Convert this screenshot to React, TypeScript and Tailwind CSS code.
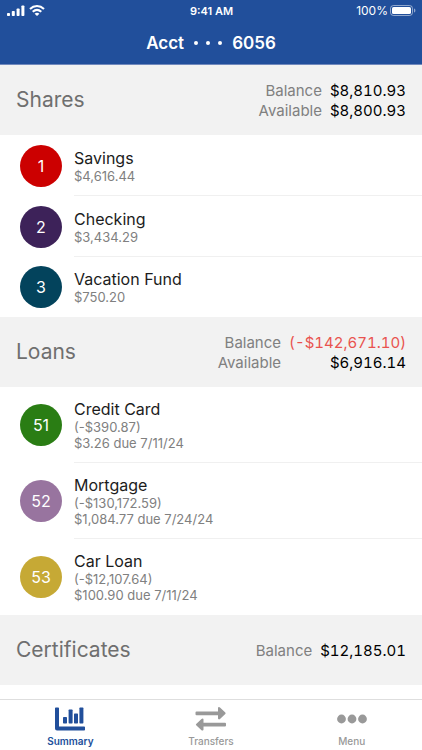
type Account = {
  id: string;
  name: string;
  details: string[];
  color: string;
};

type Total = { label: string; value: string; negative?: boolean };

type Section = { title: string; totals: Total[]; accounts: Account[] };

const sections: Section[] = [
  {
    title: "Shares",
    totals: [
      { label: "Balance", value: "$8,810.93" },
      { label: "Available", value: "$8,800.93" },
    ],
    accounts: [
      { id: "1", name: "Savings", details: ["$4,616.44"], color: "bg-[#cc0000]" },
      { id: "2", name: "Checking", details: ["$3,434.29"], color: "bg-[#3d2259]" },
      { id: "3", name: "Vacation Fund", details: ["$750.20"], color: "bg-[#03435c]" },
    ],
  },
  {
    title: "Loans",
    totals: [
      { label: "Balance", value: "(-$142,671.10)", negative: true },
      { label: "Available", value: "$6,916.14" },
    ],
    accounts: [
      { id: "51", name: "Credit Card", details: ["(-$390.87)", "$3.26 due 7/11/24"], color: "bg-[#2a7d14]" },
      { id: "52", name: "Mortgage", details: ["(-$130,172.59)", "$1,084.77 due 7/24/24"], color: "bg-[#98749f]" },
      { id: "53", name: "Car Loan", details: ["(-$12,107.64)", "$100.90 due 7/11/24"], color: "bg-[#c6a935]" },
    ],
  },
  {
    title: "Certificates",
    totals: [{ label: "Balance", value: "$12,185.01" }],
    accounts: [],
  },
];

function SignalIcon() {
  return (
    <svg width="18" height="12" viewBox="0 0 18 12" fill="currentColor" aria-hidden="true">
      <rect x="0" y="8" width="3" height="3" rx="0.8" />
      <rect x="4.8" y="6" width="3" height="5" rx="0.8" />
      <rect x="9.6" y="3.5" width="3" height="7.5" rx="0.8" />
      <rect x="14.4" y="0.5" width="3" height="10.5" rx="0.8" />
    </svg>
  );
}

function WifiIcon() {
  return (
    <svg width="16" height="12" viewBox="0 0 16 12" fill="none" stroke="currentColor" strokeWidth="2.1" aria-hidden="true">
      <path d="M1 3.9C5 .1 11 .1 15 3.9" />
      <path d="M3.7 6.8c2.6-2.3 6-2.3 8.6 0" />
      <path d="M8 11.1 5.6 8.7c1.4-1.2 3.4-1.2 4.8 0Z" fill="currentColor" stroke="none" />
    </svg>
  );
}

function BatteryIcon() {
  return (
    <svg width="26" height="12" viewBox="0 0 26 12" aria-hidden="true">
      <rect x="0.5" y="0.5" width="22" height="10" rx="3" fill="none" stroke="#fff" strokeOpacity="0.5" />
      <rect x="2" y="2" width="19" height="7" rx="1.6" fill="#fff" />
      <path d="M24 3.5v4c1-.4 1.4-1.1 1.4-2S25 3.900 24 3.500Z" fill="#fff" fillOpacity="0.5" />
    </svg>
  );
}

function SummaryIcon() {
  return (
    <svg width="32" height="24" viewBox="0 0 32 24" fill="currentColor" aria-hidden="true">
      <path d="M1 1.3Q1 .5 1.8.5H4.2Q5 .5 5 1.3V19.5H30.2Q31 19.5 31 20.3V22.7Q31 23.5 30.2 23.5H3Q1 23.5 1 21.5Z" />
      <rect x="9" y="10" width="4" height="6.5" rx="0.7" />
      <rect x="14.6" y="2.5" width="4" height="14" rx="0.7" />
      <rect x="20" y="6.5" width="4" height="10" rx="0.7" />
      <rect x="25.4" y="0.5" width="4" height="16" rx="0.7" />
    </svg>
  );
}

function TransfersIcon() {
  return (
    <svg width="32" height="24" viewBox="0 0 32 24" fill="currentColor" aria-hidden="true">
      <path d="M1.5 4.5H23V1Q23 0 24 0Q24.5 0 25 .5L30.3 5.6Q31 6.3 30.3 7L25 12.1Q24 12.900 23.3 12Q23 11.700 23 11.3V8.3H1.5Q.5 8.3 .5 7.3V5.5Q.5 4.5 1.5 4.5Z" />
      <path d="M30 15.7H8.5V12.5Q8.5 11.5 7.5 11.5Q7 11.5 6.5 12L1.2 16.9Q.5 17.6 1.2 18.3L6.5 23.2Q7.5 24 8.2 23.2Q8.5 22.9 8.5 22.5V19.5H30Q31 19.5 31 18.5V16.7Q31 15.7 30 15.7Z" />
    </svg>
  );
}

function MenuIcon() {
  return (
    <svg width="32" height="24" viewBox="0 0 32 24" fill="currentColor" aria-hidden="true">
      <circle cx="5.5" cy="12" r="4.4" />
      <circle cx="16" cy="12" r="4.4" />
      <circle cx="26.5" cy="12" r="4.4" />
    </svg>
  );
}

function SectionHeader({ title, totals }: Pick<Section, "title" | "totals">) {
  return (
    <header className="flex h-[70px] items-center justify-between bg-[#f2f2f2] px-4">
      <h2 className="text-[21px] leading-7 text-[#6f6f6f]">{title}</h2>
      <dl className="grid grid-cols-[auto_auto] gap-x-2 pt-0.5 text-right leading-5">
        {totals.map((total) => (
          <div key={total.label} className="contents">
            <dt className="text-[15px] leading-5 text-[#808080]">{total.label}</dt>
            <dd className={`text-[15px] leading-5 tabular-nums ${total.negative ? "text-[#e9524f]" : "text-black"}`}>
              {total.value}
            </dd>
          </div>
        ))}
      </dl>
    </header>
  );
}

function AccountRow({ account }: { account: Account }) {
  return (
    <li className="group flex items-stretch pl-5">
      <span
        className={`flex size-[42px] shrink-0 items-center justify-center self-center rounded-full text-base text-white ${account.color}`}
      >
        {account.id}
      </span>
      <div className="ml-3 flex min-h-[61px] flex-1 flex-col justify-center border-b border-[#f0f0f0] pt-3 pb-[11px] group-last:min-h-[60px] group-last:border-transparent">
        <h3 className="text-base leading-5 text-[#1c1c1c]">{account.name}</h3>
        {account.details.map((line) => (
          <p key={line} className="text-[13px] leading-4 text-[#808080]">
            {line}
          </p>
        ))}
      </div>
    </li>
  );
}

const tabs = [
  { label: "Summary", Icon: SummaryIcon, active: true },
  { label: "Transfers", Icon: TransfersIcon, active: false },
  { label: "Menu", Icon: MenuIcon, active: false },
];

export default function App() {
  return (
    <div className="flex h-screen flex-col overflow-hidden bg-white font-[Inter,'Liberation_Sans',sans-serif]">
      <div className="shrink-0 border-b border-[#7189bd] bg-[#214f9b] text-white">
        <div className="grid h-[22px] grid-cols-3 items-center pr-1.5 pl-[7px] text-[11px] leading-4">
          <div className="flex items-center gap-1">
            <SignalIcon />
            <WifiIcon />
          </div>
          <time className="text-center font-semibold">9:41 AM</time>
          <div className="flex items-center justify-end gap-0.5">
            <span className="text-xs">100%</span>
            <BatteryIcon />
          </div>
        </div>
        <h1 className="flex h-[42px] items-center justify-center gap-2.5 text-[17px] leading-6 font-semibold">
          <span>Acct</span>
          <span className="flex gap-2" aria-hidden="true">
            <span className="size-1 rounded-full bg-white" />
            <span className="size-1 rounded-full bg-white" />
            <span className="size-1 rounded-full bg-white" />
          </span>
          <span>6056</span>
        </h1>
      </div>

      <main className="min-h-0 flex-1 overflow-hidden">
        {sections.map((section) => (
          <section key={section.title}>
            <SectionHeader title={section.title} totals={section.totals} />
            <ul>
              {section.accounts.map((account) => (
                <AccountRow key={account.id} account={account} />
              ))}
            </ul>
          </section>
        ))}
      </main>

      <nav className="grid shrink-0 grid-cols-3 border-t border-[#dedede] bg-white">
        {tabs.map(({ label, Icon, active }) => (
          <button
            key={label}
            type="button"
            aria-current={active ? "page" : undefined}
            className={`flex h-[50px] flex-col items-center gap-1 pt-[7px] text-[10px] leading-3 ${active ? "font-semibold text-[#214f9b]" : "font-medium text-[#999999]"}`}
          >
            <Icon />
            <span>{label}</span>
          </button>
        ))}
      </nav>
    </div>
  );
}
